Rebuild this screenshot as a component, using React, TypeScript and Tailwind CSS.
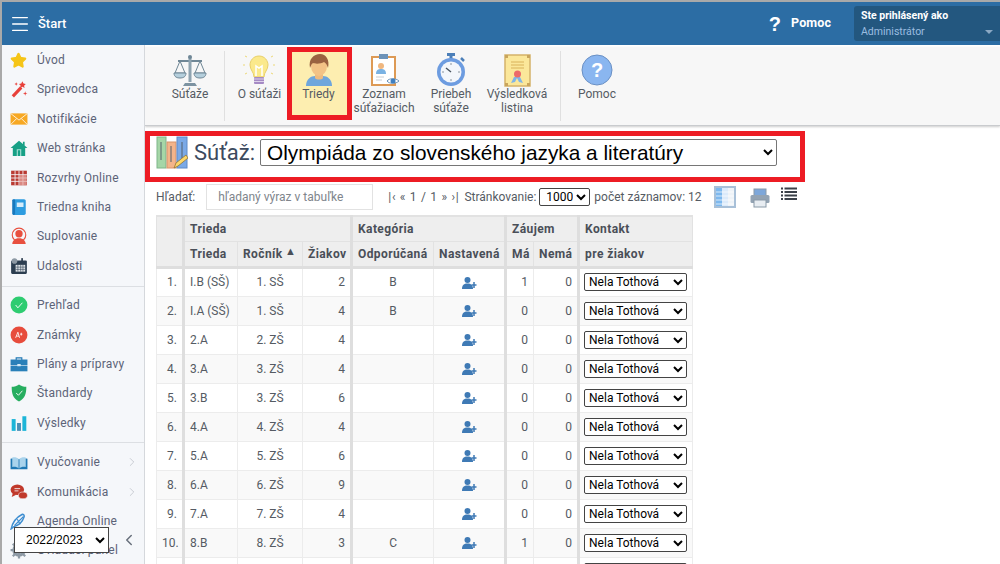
import { ReactNode } from 'react';
import { Menu, ChevronRight, ChevronLeft, Star } from 'lucide-react';

const font = { fontFamily: 'Roboto, sans-serif' };

function Svg({ children, size = 18 }: { children: ReactNode; size?: number }) {
  return (
    <svg width={size} height={size} viewBox="0 0 32 32" className="shrink-0">
      {children}
    </svg>
  );
}

const sideIcons: Record<string, ReactNode> = {
  star: <Star size={17} fill="#f5c518" stroke="#f5c518" />,
  wand: (
    <Svg>
      <path d="M3 27 18 11l4 4L7 31z" fill="#e8403a" />
      <path d="M22 2l2 4 4 1-3 3 1 4-4-2-4 2 1-4-3-3 4-1z" fill="#e8403a" />
      <path d="M27 20l1 3 3 1-3 1-1 3-1-3-3-1 3-1zM11 4l1 2 2 1-2 1-1 2-1-2-2-1 2-1z" fill="#e8403a" />
    </Svg>
  ),
  mail: (
    <Svg>
      <rect x="1" y="6" width="30" height="20" fill="#f7a823" />
      <path d="M1 6l15 12L31 6M1 26l11-11M31 26 20 15" stroke="#fff" strokeWidth="1.4" fill="none" />
    </Svg>
  ),
  home: (
    <Svg>
      <path d="M16 3 1 16h4v14h22V16h4l-5-4.5V5h-3v4z" fill="#17a086" />
      <path d="M12 18h8v12h-2V20h-4v10h-2z" fill="#a7e0d5" />
    </Svg>
  ),
  grid: (
    <Svg>
      <rect x="2" y="3" width="28" height="26" fill="#b93a32" />
      <path d="M9 3v26M16 3v26M23 3v26M2 10h28M2 16h28M2 22h28" stroke="#f5f7fa" strokeWidth="1.5" />
      <rect x="16.5" y="10.5" width="13" height="18" fill="#e8a9a4" opacity=".7" />
    </Svg>
  ),
  book: (
    <Svg>
      <rect x="5" y="2" width="23" height="28" rx="3" fill="#2d9ce0" />
      <rect x="4" y="2" width="5" height="28" rx="2" fill="#1878bd" />
      <rect x="12" y="8" width="12" height="8" fill="#d5ecfa" />
    </Svg>
  ),
  person: (
    <Svg>
      <circle cx="16" cy="14" r="12" fill="none" stroke="#e8503f" strokeWidth="2" />
      <circle cx="16" cy="12" r="6.5" fill="#e8503f" />
      <path d="M4 30c1-8 7-9 9-10h6c2 1 8 2 9 10z" fill="#e8503f" />
    </Svg>
  ),
  calendar: (
    <Svg>
      <rect x="2" y="6" width="28" height="24" rx="2" fill="#2c3e50" />
      <rect x="10" y="14" width="17" height="12" fill="#dfe4e8" />
      <path d="M14 14v12M19 14v12M23 14v12M10 18h17M10 22h17" stroke="#2c3e50" />
      <circle cx="8" cy="7" r="5" fill="#8d99a4" />
      <rect x="20" y="2" width="3" height="7" fill="#2c3e50" />
    </Svg>
  ),
  check: (
    <Svg>
      <circle cx="16" cy="16" r="15" fill="#2ecc71" />
      <path d="M10 16l4 5 8-9" fill="none" stroke="#fff" strokeWidth="1.6" />
    </Svg>
  ),
  grade: (
    <Svg>
      <circle cx="16" cy="16" r="15" fill="#e74c3c" />
      <path d="M10 21l4-10 3 10M11.5 18h4.5M20 12v5M18 14.500h4" fill="none" stroke="#fff" strokeWidth="1.5" />
    </Svg>
  ),
  case: (
    <Svg>
      <path d="M11 9V5h10v4" fill="none" stroke="#1f78b4" strokeWidth="2" />
      <rect x="1" y="8" width="30" height="10" fill="#2980b9" />
      <rect x="1" y="19" width="30" height="10" fill="#2980b9" />
      <rect x="13" y="16" width="6" height="4" fill="#d5ecfa" />
    </Svg>
  ),
  shield: (
    <Svg>
      <path d="M16 1c4 3 8 4 13 4 0 12-2 21-13 26C5 26 3 17 3 5c5 0 9-1 13-4z" fill="#27ae60" />
      <path d="M11 16l4 4 7-8" fill="none" stroke="#fff" strokeWidth="1.6" />
    </Svg>
  ),
  bars: (
    <Svg>
      <rect x="3" y="9" width="7" height="21" fill="#1cb5d8" />
      <rect x="12.500" y="16" width="7" height="14" fill="#4a8fb5" />
      <rect x="22" y="4" width="7" height="26" fill="#1cb5d8" />
    </Svg>
  ),
  open: (
    <Svg>
      <path d="M1 10c5-1 11 0 15 3 4-3 10-4 15-3v19H1z" fill="#1f78b4" />
      <path d="M4 8c4-1 9 0 12 3 3-3 8-4 12-3v17c-4-1-9 0-12 3-3-3-8-4-12-3z" fill="#a9d3ec" />
      <path d="M16 11v17" stroke="#1f78b4" strokeWidth="1.5" />
    </Svg>
  ),
  chat: (
    <Svg>
      <ellipse cx="13" cy="12" rx="12" ry="9.500" fill="#c0392b" />
      <path d="M5 18l-2 7 8-4z" fill="#c0392b" />
      <ellipse cx="23" cy="22" rx="8" ry="6" fill="#c0392b" stroke="#f5f7fa" />
      <path d="M8 10h10M8 14h7" stroke="#f5f7fa" strokeWidth="1.500" />
    </Svg>
  ),
  feather: (
    <Svg>
      <path d="M2 30c2-9 8-20 20-26 2 0 4 2 3 5-3 9-10 15-18 17z" fill="none" stroke="#3c8dd0" strokeWidth="2.500" />
      <path d="M8 24 24 8M13 13l5 9" stroke="#3c8dd0" strokeWidth="2" />
    </Svg>
  ),
  gear: (
    <Svg>
      <circle cx="16" cy="16" r="9" fill="none" stroke="#8d99a4" strokeWidth="6" />
      <path d="M16 1v30M1 16h30M5 5l22 22M27 5 5 27" stroke="#8d99a4" strokeWidth="4" />
      <circle cx="16" cy="16" r="4" fill="#f5f7fa" />
    </Svg>
  ),
};

type SideItem = { icon: string; label: string; arrow?: boolean };

const groups: SideItem[][] = [
  [
    { icon: 'star', label: 'Úvod' },
    { icon: 'wand', label: 'Sprievodca' },
    { icon: 'mail', label: 'Notifikácie' },
    { icon: 'home', label: 'Web stránka' },
    { icon: 'grid', label: 'Rozvrhy Online' },
    { icon: 'book', label: 'Triedna kniha' },
    { icon: 'person', label: 'Suplovanie' },
    { icon: 'calendar', label: 'Udalosti' },
  ],
  [
    { icon: 'check', label: 'Prehľad' },
    { icon: 'grade', label: 'Známky' },
    { icon: 'case', label: 'Plány a prípravy' },
    { icon: 'shield', label: 'Štandardy' },
    { icon: 'bars', label: 'Výsledky' },
  ],
  [
    { icon: 'open', label: 'Vyučovanie', arrow: true },
    { icon: 'chat', label: 'Komunikácia', arrow: true },
    { icon: 'feather', label: 'Agenda Online' },
    { icon: 'gear', label: 'Ovládací panel' },
  ],
];

function Sidebar() {
  return (
    <aside className="relative w-[143px] shrink-0 border-r border-[#d5d8dc] bg-[#f5f7fa] overflow-hidden pt-[0.400px]">
      {groups.map((g, i) => (
        <div key={i} className={i > 0 ? 'border-t border-[#dcdfe3] pt-[4px] mt-[5px]' : ''}>
          {g.map((it) => (
            <div key={it.label} className="h-[29.4px] flex items-center text-[12px] tracking-[0.2px] text-[#5c6378]">
              <span className="w-[35px] pl-[8px] flex items-center">{sideIcons[it.icon]}</span>
              <span className="flex-1 whitespace-nowrap">{it.label}</span>
              {it.arrow && <ChevronRight size={14} strokeWidth={1} className="mr-[5px] text-[#aab0b8]" />}
            </div>
          ))}
        </div>
      ))}
      <div className="absolute left-[12px] top-[482px] flex items-center">
        <select
          defaultValue="2022/2023"
          className="w-[95px] h-[26px] pl-[7px] bg-white border border-[#444] text-[12px] text-black"
          style={{ fontFamily: 'Liberation Sans, sans-serif' }}
        >
          <option>2022/2023</option>
        </select>
        <ChevronLeft size={18} strokeWidth={2} className="ml-[11px] text-[#68707c]" />
      </div>
    </aside>
  );
}

function Tool({ icon, label, active }: { icon: ReactNode; label: ReactNode; active?: boolean }) {
  return (
    <div className={`flex flex-col items-center shrink-0 h-[65px] pt-[3px] text-[12px] leading-[14px] text-center text-[#555b63] ${active ? 'bg-[#fdeeb0]' : ''}`}>
      <div className="h-[32px] flex items-center justify-center mb-[1px]">{icon}</div>
      <div>{label}</div>
    </div>
  );
}

const Scales = (
  <svg width="34" height="34" viewBox="0 0 34 34">
    <path d="M5 8h24" stroke="#6f8796" strokeWidth="2" />
    <rect x="15.500" y="4" width="3" height="25" fill="#8ea3b0" />
    <circle cx="17" cy="4" r="2" fill="#6f8796" />
    <path d="M12 30h10l2 3H10z" fill="#7d93a1" />
    <path d="M7 8 2 20h10zM27 8l-5 12h10z" fill="none" stroke="#6f8796" />
    <path d="M1 20h12c0 4-3 5-6 5s-6-1-6-5zM21 20h12c0 4-3 5-6 5s-6-1-6-5z" fill="#b5cfdc" stroke="#6f8796" />
  </svg>
);
const Bulb = (
  <svg width="34" height="34" viewBox="0 0 34 34">
    <path d="M17 3c6 0 9 5 9 9 0 5-4 7-4 12H12c0-5-4-7-4-12 0-4 3-9 9-9z" fill="#fbe98b" stroke="#e8cf6a" />
    <path d="M14 23V13l3 2 3-2v10" fill="none" stroke="#fff" strokeWidth="1.500" />
    <rect x="12" y="24" width="10" height="7" rx="1" fill="#a58ac4" />
    <path d="M12 26h10M12 28.500h10" stroke="#ddd2ea" />
    <path d="M3 12H1M33 12h-2M5 4 3 3M29 4l2-1M5 20l-2 1M29 20l2 1" stroke="#ecd878" />
  </svg>
);
const Student = (
  <svg width="34" height="34" viewBox="0 0 34 34">
    <path d="M4 33c0-7 5-10 9-10h8c4 0 9 3 9 10z" fill="#6fa6dc" />
    <path d="M13 20h8v5c-1 2-7 2-8 0z" fill="#eebb7f" />
    <ellipse cx="17" cy="13" rx="8" ry="10" fill="#f3c386" />
    <path d="M8 15C6 6 12 1 18 1c6 0 10 6 8 14-1-3-2-5-4-6-3 2-9 2-11 1-2 1-2 3-3 5z" fill="#9a6240" />
  </svg>
);
const Clipboard = (
  <svg width="34" height="34" viewBox="0 0 34 34">
    <rect x="5" y="4" width="23" height="28" fill="#fff" stroke="#dd9a55" strokeWidth="2" />
    <rect x="12" y="1" width="9" height="5" fill="#6d93b8" />
    <circle cx="14" cy="13" r="3" fill="#f0b77f" />
    <path d="M9 21c0-4 2-5 5-5s5 1 5 5z" fill="#7ab2e3" />
    <path d="M9 24h8M9 27h6" stroke="#c9ced3" />
    <path d="M20 28c2-3 9-3 12 0-3 3-10 3-12 0z" fill="#fff" stroke="#6d93b8" />
    <circle cx="26" cy="28" r="2.500" fill="#3f7fbf" />
  </svg>
);
const Stopwatch = (
  <svg width="34" height="34" viewBox="0 0 34 34">
    <rect x="13" y="0" width="8" height="3" fill="#4c7fb8" />
    <rect x="15.500" y="3" width="3" height="4" fill="#4c7fb8" />
    <path d="M27 5l3 3" stroke="#4c7fb8" strokeWidth="2.500" />
    <circle cx="17" cy="19" r="14" fill="#6d9ce0" />
    <circle cx="17" cy="19" r="10.500" fill="#f3f6fb" />
    <path d="M17 19l-5-4" stroke="#4a5560" strokeWidth="1.500" />
    <path d="M17 10v2M17 26v2M8 19h2M24 19h2" stroke="#8a949e" />
  </svg>
);
const Diploma = (
  <svg width="34" height="34" viewBox="0 0 34 34">
    <rect x="5" y="2" width="25" height="31" fill="#fbe79a" stroke="#d5b36a" strokeWidth="1.500" />
    <path d="M5 2h3v3H5zM27 2h3v3h-3zM5 30h3v3H5zM27 30h3v3h-3z" fill="#c9a55c" />
    <path d="M11 9h13M11 12h13M11 15h13" stroke="#d9b25a" />
    <path d="M14 24l-3 6 4-1 2-4 2 4 4 1-3-6z" fill="#7fb5e8" />
    <circle cx="17.500" cy="21" r="3.500" fill="#ec6a6a" />
  </svg>
);
const Question = (
  <svg width="32" height="32" viewBox="0 0 32 32">
    <circle cx="16" cy="16" r="15" fill="#8ab6f0" stroke="#6a90c4" />
    <text x="16" y="23" textAnchor="middle" fontSize="20" fontWeight="700" fill="#fff" fontFamily="Liberation Sans, sans-serif">?</text>
  </svg>
);

function Toolbar() {
  return (
    <div className="h-[79px] bg-[#f7f7f7] border-b border-[#c9cbce] shadow-[0_1px_2px_rgba(0,0,0,0.2)] flex items-start pt-[4px] pl-[11px]">
      <div className="w-[68px] flex justify-center"><Tool icon={Scales} label="Súťaže" /></div>
      <div className="w-px h-[70px] bg-[#e0e0e0]" />
      <div className="w-[63px] pl-[6px] flex justify-center"><Tool icon={Bulb} label="O súťaži" /></div>
      <div className="w-[60px] pl-[1px]"><Tool icon={Student} label="Triedy" active /></div>
      <div className="w-[72px] flex justify-center"><Tool icon={Clipboard} label={<>Zoznam<br />súťažiacich</>} /></div>
      <div className="w-[62px] flex justify-center"><Tool icon={Stopwatch} label={<>Priebeh<br />súťaže</>} /></div>
      <div className="w-[70px] flex justify-center"><Tool icon={Diploma} label={<>Výsledková<br />listina</>} /></div>
      <div className="w-px h-[70px] ml-[8px] bg-[#e0e0e0]" />
      <div className="w-[72px] flex justify-center"><Tool icon={Question} label="Pomoc" /></div>
    </div>
  );
}

const rows = [
  ['1.', 'I.B (SŠ)', '1. SŠ', '2', 'B', '1', '0'],
  ['2.', 'I.A (SŠ)', '1. SŠ', '4', 'B', '0', '0'],
  ['3.', '2.A', '2. ZŠ', '4', '', '0', '0'],
  ['4.', '3.A', '3. ZŠ', '4', '', '0', '0'],
  ['5.', '3.B', '3. ZŠ', '6', '', '0', '0'],
  ['6.', '4.A', '4. ZŠ', '4', '', '0', '0'],
  ['7.', '5.A', '5. ZŠ', '6', '', '0', '0'],
  ['8.', '6.A', '6. ZŠ', '9', '', '0', '0'],
  ['9.', '7.A', '7. ZŠ', '4', '', '0', '0'],
  ['10.', '8.B', '8. ZŠ', '3', 'C', '1', '0'],
  ['11.', '9.A', '9. ZŠ', '5', '', '0', '0'],
];

const UserPlus = (
  <svg width="15" height="12" viewBox="0 0 15 12" className="inline-block">
    <circle cx="5.500" cy="3" r="3" fill="#3f7ab5" />
    <path d="M0 12c0-4 2-5.500 5.500-5.500S11 8 11 12z" fill="#3f7ab5" />
    <path d="M12 5v6M9.500 8h5" stroke="#3f7ab5" strokeWidth="1.500" />
  </svg>
);

const thick = 'border-l-[3px] border-l-[#dedede]';
const th = 'border border-[#e2e2e2] bg-[#eeeeee] text-left font-bold px-[5px] tracking-[0.4px] text-[#4a4f58] whitespace-nowrap';
const td = 'border border-[#ececec] px-[5px] text-[12px] text-[#555b63]';

function DataTable() {
  return (
    <table className="table-fixed border-collapse text-[12px] w-[536px] mt-[5px] border-t-2 border-t-[#e2e2e2]">
      <colgroup>
        <col className="w-[27px]" />
        <col className="w-[54px]" />
        <col className="w-[65px]" />
        <col className="w-[49px]" />
        <col className="w-[82px]" />
        <col className="w-[72px]" />
        <col className="w-[28px]" />
        <col className="w-[45px]" />
        <col className="w-[114px]" />
      </colgroup>
      <thead>
        <tr className="h-[25px]">
          <th rowSpan={2} className={th} />
          <th colSpan={3} className={`${th} ${thick}`}>Trieda</th>
          <th colSpan={2} className={`${th} ${thick}`}>Kategória</th>
          <th colSpan={2} className={`${th} ${thick}`}>Záujem</th>
          <th className={`${th} ${thick} px-[4px]`}>Kontakt</th>
        </tr>
        <tr className="h-[26px] border-b-[3px] border-b-[#dedede]">
          <th className={`${th} ${thick}`}>Trieda</th>
          <th className={th}>
            <span className="relative">Ročník<span className="absolute left-[42px] -top-[3px] text-[11px]">▲</span></span>
          </th>
          <th className={`${th} text-right px-[4px]`}>Žiakov</th>
          <th className={`${th} ${thick} px-[4px]`}>Odporúčaná</th>
          <th className={`${th} text-center px-0`}>Nastavená</th>
          <th className={`${th} ${thick} text-center px-0`}>Má</th>
          <th className={`${th} text-center px-0`}>Nemá</th>
          <th className={`${th} ${thick} px-[4px]`}>pre žiakov</th>
        </tr>
      </thead>
      <tbody>
        {rows.map((r, i) => (
          <tr key={r[0]} className={`h-[29px] ${i % 2 ? 'bg-[#f9f9f9]' : 'bg-white'}`}>
            <td className={`${td} text-right`}>{r[0]}</td>
            <td className={`${td} ${thick}`}>{r[1]}</td>
            <td className={`${td} text-center`}>{r[2]}</td>
            <td className={`${td} text-right`}>{r[3]}</td>
            <td className={`${td} ${thick} text-center`}>{r[4]}</td>
            <td className={`${td} text-center`}>{UserPlus}</td>
            <td className={`${td} ${thick} text-right`}>{r[5]}</td>
            <td className={`${td} text-right`}>{r[6]}</td>
            <td className={`${td} ${thick} !px-[4px]`}>
              <select
                defaultValue="Nela Tothová"
                className="w-[103px] h-[18px] pl-0 bg-white border border-[#444] rounded-[2px] text-[12px] text-black block"
                style={font}
              >
                <option>Nela Tothová</option>
              </select>
            </td>
          </tr>
        ))}
      </tbody>
    </table>
  );
}

export default function App() {
  return (
    <div className="w-[1000px] h-[564px] overflow-hidden bg-white flex flex-col pt-[2px] pl-[2px] bg-clip-content relative" style={font}>
      <div className="absolute inset-x-0 top-0 h-[2px] bg-[#a9a9a9]" />
      <div className="absolute inset-y-0 left-0 w-[2px] bg-[#a9a9a9]" />
      <header className="h-[43px] shrink-0 bg-[#2c6da4] flex items-center text-white">
        <Menu size={22} strokeWidth={1.5} className="ml-[7px]" />
        <span className="ml-[7px] text-[13px] font-medium">Štart</span>
        <div className="ml-auto flex items-center">
          <span className="text-[20px] font-bold leading-none" style={{ fontFamily: 'Liberation Sans, sans-serif' }}>?</span>
          <span className="ml-[10px] text-[12.500px] font-bold tracking-[0.1px]">Pomoc</span>
          <div className="ml-[23px] w-[146px] h-[35px] rounded-l-[3px] bg-[#23577f] pl-[7px] pt-[4px] relative">
            <div className="text-[10.500px] font-bold leading-[12px]">Ste prihlásený ako</div>
            <div className="mt-[3px] text-[10.500px] leading-[14px] text-[#9bbde0]">Administrátor</div>
            <span className="absolute right-[7px] bottom-[7px] w-0 h-0 border-x-[4px] border-x-transparent border-t-[4px] border-t-[#8aa8c4]" />
          </div>
        </div>
      </header>
      <div className="flex flex-1 min-h-0">
        <Sidebar />
        <main className="flex-1 min-w-0 overflow-hidden pt-[2px]">
          <Toolbar />
          <div className="mt-[13px] h-[27px] pl-[11px] flex items-center text-[22px] text-[#3c4a5e]">
            <svg width="32" height="33" viewBox="0 0 32 33" className="shrink-0">
              <rect x="1" y="1" width="9" height="31" fill="#a5d6a7" stroke="#7fb58a" />
              <rect x="11" y="6" width="9" height="26" fill="#f3b48a" stroke="#d8946a" />
              <rect x="21" y="1" width="10" height="31" fill="#7aa9e6" stroke="#5c8ac8" />
              <path d="M5 6v18M15 10v16M26 6v16" stroke="#55606a" />
              <path d="M18 32l2-5 10-8 2 3-10 8z" fill="#fcd76a" stroke="#8a6a2a" strokeWidth=".7" />
            </svg>
            <span className="ml-[6px]">Súťaž:</span>
            <select
              defaultValue="o"
              className="ml-[5px] w-[517px] h-[27px] pl-[2px] bg-white border border-[#767676] rounded-[2px] text-[20.800px] text-black"
              style={{ fontFamily: 'Liberation Sans, sans-serif' }}
            >
              <option value="o">Olympiáda zo slovenského jazyka a literatúry</option>
            </select>
          </div>
          <div className="mt-[17px] h-[27px] pl-[11px] flex items-center text-[12px] text-[#555b63]">
            <span>Hľadať:</span>
            <input
              placeholder="hľadaný výraz v tabuľke"
              className="ml-[11px] w-[167px] h-[26px] px-[11px] border border-[#e2e2e2] text-[12px] outline-none placeholder:text-[#80858c]"
            />
            <span className="ml-[15px] whitespace-nowrap tracking-[0.7px]">|‹ « 1 / 1 » ›|</span>
            <span className="ml-[5px]">Stránkovanie:</span>
            <select
              defaultValue="1000"
              className="ml-[3px] w-[51px] h-[18px] pl-[2px] bg-white border border-[#444] rounded-[2px] text-[12px] text-black"
              style={font}
            >
              <option>1000</option>
            </select>
            <span className="ml-[4px]">počet záznamov: 12</span>
            <svg width="22" height="22" viewBox="0 0 22 22" className="ml-[12px]">
              <rect width="22" height="22" fill="#a8c0d8" />
              <rect x="2" y="2" width="6" height="18" fill="#7db8ee" />
              <rect x="8" y="2" width="6" height="18" fill="#dbeafa" />
              <rect x="14" y="2" width="6" height="18" fill="#eef3f8" />
              <path d="M2 6h18M2 10h18M2 14h18M2 18h18" stroke="#fff" strokeWidth=".7" />
            </svg>
            <svg width="20" height="20" viewBox="0 0 20 20" className="ml-[14px] mt-[2px]">
              <rect x="4" y="1" width="12" height="7" fill="#7da7da" stroke="#8a9aa8" />
              <rect x="0.500" y="7" width="19" height="8" rx="1.500" fill="#93a3b3" />
              <rect x="4" y="12" width="12" height="7" fill="#e8edf2" stroke="#8a9aa8" />
            </svg>
            <svg width="16" height="14" viewBox="0 0 16 14" className="ml-[11px] -mt-[5px]">
              <path d="M0 1.500h2M3.500 1.500H16M0 5h2M3.500 5H16M0 8.500h2M3.500 8.500H16M0 12h2M3.500 12H16" stroke="#3a4048" strokeWidth="2" />
            </svg>
          </div>
          <div className="pl-[11px]"><DataTable /></div>
        </main>
      </div>
      {/* red annotation frames */}
      <div className="absolute left-[287px] top-[47px] w-[65px] h-[73px] border-[5px] border-[#ed1c24] pointer-events-none" />
      <div className="absolute left-[145px] top-[131px] w-[660px] h-[51px] border-[5px] border-[#ed1c24] pointer-events-none" />
    </div>
  );
}
